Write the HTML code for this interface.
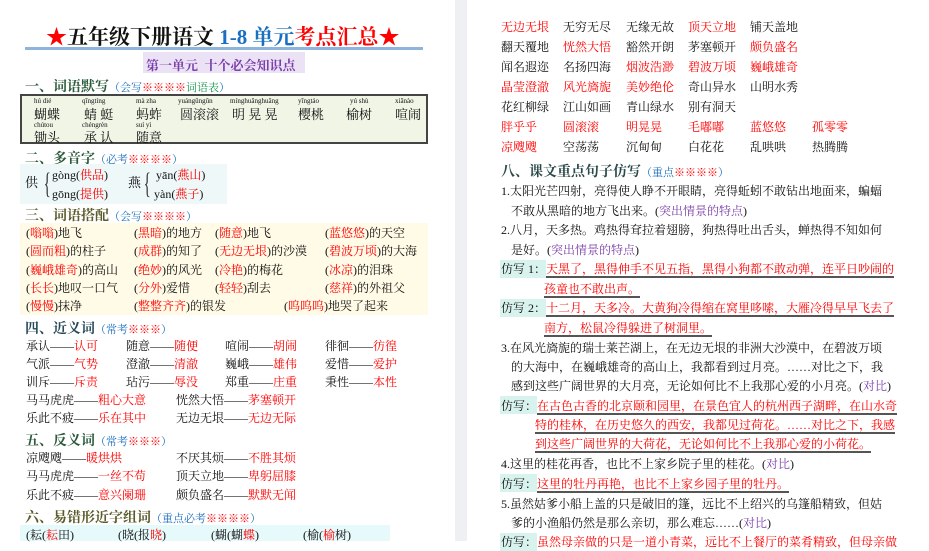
<!DOCTYPE html>
<html><head><meta charset="utf-8"><style>
*{margin:0;padding:0;box-sizing:border-box}
body{width:929px;height:541px;overflow:hidden;background:#fff;position:relative;font-family:"Liberation Serif","Noto Serif CJK SC","Noto Sans CJK SC",serif;color:#111}
.a{position:absolute;white-space:nowrap}
.r{color:#f00}.b{color:#1a6fc0}.g{color:#1a9a50}.p{color:#7a3fa8}
.h{font-weight:bold;font-size:14px;color:#2a5a3a}
.s{font-size:11px}
.L{font-size:12px;line-height:14px}
.R{font-size:12px;line-height:16px;letter-spacing:0}
.u{color:#f00;border-bottom:2px solid #555}
.f{background:#d8f2ee}
</style></head><body>
<div class="a" style="left:455px;top:0;width:12px;height:541px;background:#eef0f4"></div>

<!-- LEFT PAGE -->
<div class="a" style="left:46px;top:24px;font-size:21px;font-weight:bold;line-height:26px">
<span class="r">★</span>五年级下册语文 <span class="b">1-8 单元</span><span class="r">考点汇总★</span></div>
<div class="a" style="left:25px;top:47px;width:398px;height:3px;background:#8fb4dc"></div>
<div class="a" style="left:143px;top:52px;width:162px;height:21px;background:#ece2f6"></div>
<div class="a p" style="left:146px;top:55px;font-size:13px;font-weight:bold">第一单元&nbsp; 十个必会知识点</div>

<div class="a h" style="left:25px;top:76px">一、词语默写<span class="s b" style="font-weight:normal">（会写<span class="r">※※※※</span><span class="g">词语表</span>）</span></div>
<div class="a" style="left:20px;top:94px;width:408px;height:50px;background:#f0f5e6;border:2px solid #444"></div>
<div class="a" style="left:20px;top:97px;font-size:7px;width:408px">
<span class="a" style="left:14px">hú dié</span><span class="a" style="left:62px">qīngtíng</span><span class="a" style="left:116px">mà zha</span><span class="a" style="left:158px">yuángǔngǔn</span><span class="a" style="left:210px">mínghuǎnghuǎng</span><span class="a" style="left:278px">yīngtáo</span><span class="a" style="left:330px">yú shù</span><span class="a" style="left:375px">xiānào</span>
<span class="a" style="left:14px;top:24px">chútou</span><span class="a" style="left:62px;top:24px">chéngrèn</span><span class="a" style="left:116px;top:24px">suí yì</span></div>
<div class="a" style="left:20px;top:104px;font-size:13px;width:408px">
<span class="a" style="left:14px">蝴蝶</span><span class="a" style="left:64px">蜻 蜓</span><span class="a" style="left:116px">蚂蚱</span><span class="a" style="left:160px">圆滚滚</span><span class="a" style="left:212px">明 晃 晃</span><span class="a" style="left:278px">樱桃</span><span class="a" style="left:326px">榆树</span><span class="a" style="left:375px">喧闹</span>
<span class="a" style="left:14px;top:23px">锄头</span><span class="a" style="left:64px;top:23px">承 认</span><span class="a" style="left:116px;top:23px">随意</span></div>

<div class="a h" style="left:25px;top:148px">二、多音字<span class="s b" style="font-weight:normal">（必考<span class="r">※※※※</span>）</span></div>
<div class="a" style="left:20px;top:164px;width:207px;height:40px;background:#eef8f8"></div>
<div class="a L" style="left:25px;top:176px;font-size:13px">供</div>
<div class="a" style="left:40px;top:166px;font-size:30px;line-height:36px;color:#333;transform:scaleX(.5)">{</div>
<div class="a L" style="left:52px;top:168px">gòng(<span class="r">供品</span>)</div>
<div class="a L" style="left:52px;top:187px">gōng(<span class="r">提供</span>)</div>
<div class="a L" style="left:128px;top:176px;font-size:13px">燕</div>
<div class="a" style="left:140px;top:166px;font-size:30px;line-height:36px;color:#333;transform:scaleX(.5)">{</div>
<div class="a L" style="left:156px;top:168px">yān(<span class="r">燕山</span>)</div>
<div class="a L" style="left:154px;top:187px">yàn(<span class="r">燕子</span>)</div>

<div class="a h" style="left:25px;top:205px;color:#5a5a2a">三、词语搭配<span class="s b" style="font-weight:normal">（会写<span class="r">※※※※</span>）</span></div>
<div class="a" style="left:20px;top:223px;width:408px;height:92px;background:#fffbe6"></div>
<div class="a L" style="left:26px;top:226px">(<span class="r">嗡嗡</span>)地飞</div><div class="a L" style="left:134px;top:226px">(<span class="r">黑暗</span>)的地方</div><div class="a L" style="left:215px;top:226px">(<span class="r">随意</span>)地飞</div><div class="a L" style="left:325px;top:226px">(<span class="r">蓝悠悠</span>)的天空</div>
<div class="a L" style="left:26px;top:244px">(<span class="r">圆而粗</span>)的柱子</div><div class="a L" style="left:134px;top:244px">(<span class="r">成群</span>)的知了</div><div class="a L" style="left:215px;top:244px">(<span class="r">无边无垠</span>)的沙漠</div><div class="a L" style="left:325px;top:244px">(<span class="r">碧波万顷</span>)的大海</div>
<div class="a L" style="left:26px;top:263px">(<span class="r">巍峨雄奇</span>)的高山</div><div class="a L" style="left:134px;top:263px">(<span class="r">绝妙</span>)的风光</div><div class="a L" style="left:215px;top:263px">(<span class="r">冷艳</span>)的梅花</div><div class="a L" style="left:325px;top:263px">(<span class="r">冰凉</span>)的泪珠</div>
<div class="a L" style="left:26px;top:281px">(<span class="r">长长</span>)地叹一口气</div><div class="a L" style="left:134px;top:281px">(<span class="r">分外</span>)爱惜</div><div class="a L" style="left:215px;top:281px">(<span class="r">轻轻</span>)刮去</div><div class="a L" style="left:325px;top:281px">(<span class="r">慈祥</span>)的外祖父</div>
<div class="a L" style="left:26px;top:299px">(<span class="r">慢慢</span>)抹净</div><div class="a L" style="left:134px;top:299px">(<span class="r">整整齐齐</span>)的银发</div><div class="a L" style="left:284px;top:299px">(<span class="r">呜呜呜</span>)地哭了起来</div>

<div class="a h" style="left:25px;top:318px;color:#2a4a5a">四、近义词<span class="s b" style="font-weight:normal">（常考<span class="r">※※※</span>）</span></div>
<div class="a L" style="left:26px;top:339px">承认——<span class="r">认可</span></div><div class="a L" style="left:126px;top:339px">随意——<span class="r">随便</span></div><div class="a L" style="left:225px;top:339px">喧闹——<span class="r">胡闹</span></div><div class="a L" style="left:325px;top:339px">徘徊——<span class="r">彷徨</span></div>
<div class="a L" style="left:26px;top:357px">气派——<span class="r">气势</span></div><div class="a L" style="left:126px;top:357px">澄澈——<span class="r">清澈</span></div><div class="a L" style="left:225px;top:357px">巍峨——<span class="r">雄伟</span></div><div class="a L" style="left:325px;top:357px">爱惜——<span class="r">爱护</span></div>
<div class="a L" style="left:26px;top:375px">训斥——<span class="r">斥责</span></div><div class="a L" style="left:126px;top:375px">玷污——<span class="r">辱没</span></div><div class="a L" style="left:225px;top:375px">郑重——<span class="r">庄重</span></div><div class="a L" style="left:325px;top:375px">秉性——<span class="r">本性</span></div>
<div class="a L" style="left:26px;top:393px">马马虎虎——<span class="r">粗心大意</span></div><div class="a L" style="left:176px;top:393px">恍然大悟——<span class="r">茅塞顿开</span></div>
<div class="a L" style="left:26px;top:411px">乐此不疲——<span class="r">乐在其中</span></div><div class="a L" style="left:176px;top:411px">无边无垠——<span class="r">无边无际</span></div>

<div class="a h" style="left:25px;top:430px">五、反义词<span class="s b" style="font-weight:normal">（常考<span class="r">※※※</span>）</span></div>
<div class="a L" style="left:26px;top:451px">凉飕飕——<span class="r">暖烘烘</span></div><div class="a L" style="left:176px;top:451px">不厌其烦——<span class="r">不胜其烦</span></div>
<div class="a L" style="left:26px;top:469px">马马虎虎——<span class="r">一丝不苟</span></div><div class="a L" style="left:176px;top:469px">顶天立地——<span class="r">卑躬屈膝</span></div>
<div class="a L" style="left:26px;top:488px">乐此不疲——<span class="r">意兴阑珊</span></div><div class="a L" style="left:176px;top:488px">颇负盛名——<span class="r">默默无闻</span></div>

<div class="a h" style="left:25px;top:507px;color:#5a5a2a">六、易错形近字组词<span class="s b" style="font-weight:normal">（重点必考<span class="r">※※※※</span>）</span></div>
<div class="a" style="left:20px;top:525px;width:370px;height:16px;background:#e6fafc"></div>
<div class="a L" style="left:26px;top:528px">(耘(<span class="r">耘</span>田)</div><div class="a L" style="left:118px;top:528px">(晓(报<span class="r">晓</span>)</div><div class="a L" style="left:211px;top:528px">(蝴(蝴<span class="r">蝶</span>)</div><div class="a L" style="left:303px;top:528px">(榆(<span class="r">榆</span>树)</div>

<!-- RIGHT PAGE -->
<div class="a L" style="left:501px;top:20px;font-size:12px">
<div class="a" style="left:0"><span class="r">无边无垠</span></div><div class="a" style="left:62px">无穷无尽</div><div class="a" style="left:125px">无缘无故</div><div class="a r" style="left:187px">顶天立地</div><div class="a" style="left:249px">铺天盖地</div>
<div class="a" style="left:0;top:20px">翻天覆地</div><div class="a r" style="left:62px;top:20px">恍然大悟</div><div class="a" style="left:125px;top:20px">豁然开朗</div><div class="a" style="left:187px;top:20px">茅塞顿开</div><div class="a r" style="left:249px;top:20px">颇负盛名</div>
<div class="a" style="left:0;top:40px">闻名遐迩</div><div class="a" style="left:62px;top:40px">名扬四海</div><div class="a r" style="left:125px;top:40px">烟波浩渺</div><div class="a r" style="left:187px;top:40px">碧波万顷</div><div class="a r" style="left:249px;top:40px">巍峨雄奇</div>
<div class="a r" style="left:0;top:60px">晶莹澄澈</div><div class="a r" style="left:62px;top:60px">风光旖旎</div><div class="a r" style="left:125px;top:60px">美妙绝伦</div><div class="a" style="left:187px;top:60px">奇山异水</div><div class="a" style="left:249px;top:60px">山明水秀</div>
<div class="a" style="left:0;top:80px">花红柳绿</div><div class="a" style="left:62px;top:80px">江山如画</div><div class="a" style="left:125px;top:80px">青山绿水</div><div class="a" style="left:187px;top:80px">别有洞天</div>
<div class="a r" style="left:0;top:100px">胖乎乎</div><div class="a r" style="left:62px;top:100px">圆滚滚</div><div class="a r" style="left:125px;top:100px">明晃晃</div><div class="a r" style="left:187px;top:100px">毛嘟嘟</div><div class="a r" style="left:249px;top:100px">蓝悠悠</div><div class="a r" style="left:311px;top:100px">孤零零</div>
<div class="a r" style="left:0;top:120px">凉飕飕</div><div class="a" style="left:62px;top:120px">空荡荡</div><div class="a" style="left:125px;top:120px">沉甸甸</div><div class="a" style="left:187px;top:120px">白花花</div><div class="a" style="left:249px;top:120px">乱哄哄</div><div class="a" style="left:311px;top:120px">热腾腾</div>
</div>

<div class="a h" style="left:501px;top:161px;color:#2a4a4a">八、课文重点句子仿写<span class="s b" style="font-weight:normal">（重点<span class="r">※※※※</span>）</span></div>
<div class="a R" style="left:501px;top:183px">1.太阳光芒四射，亮得使人睁不开眼睛，亮得蚯蚓不敢钻出地面来，蝙蝠</div>
<div class="a R" style="left:511px;top:203px">不敢从黑暗的地方飞出来。(<span class="p">突出情景的特点</span>)</div>
<div class="a R" style="left:501px;top:222px">2.八月，天多热。鸡热得耷拉着翅膀，狗热得吐出舌头，蝉热得不知如何</div>
<div class="a R" style="left:511px;top:242px">是好。(<span class="p">突出情景的特点</span>)</div>
<div class="a f" style="left:500px;top:260px;width:46px;height:18px"></div>
<div class="a R" style="left:501px;top:261px">仿写 1：<span class="u">天黑了，黑得伸手不见五指，黑得小狗都不敢动弹，连平日吵闹的</span></div>
<div class="a R" style="left:544px;top:281px"><span class="u">孩童也不敢出声。</span></div>
<div class="a f" style="left:500px;top:299px;width:46px;height:18px"></div>
<div class="a R" style="left:501px;top:300px">仿写 2：<span class="u">十二月，天多冷。大黄狗冷得缩在窝里哆嗦，大雁冷得早早飞去了</span></div>
<div class="a R" style="left:544px;top:320px"><span class="u">南方，松鼠冷得躲进了树洞里。</span></div>
<div class="a R" style="left:501px;top:340px">3.在风光旖旎的瑞士莱芒湖上，在无边无垠的非洲大沙漠中，在碧波万顷</div>
<div class="a R" style="left:511px;top:359px">的大海中，在巍峨雄奇的高山上，我都看到过月亮。……对比之下，我</div>
<div class="a R" style="left:511px;top:378px">感到这些广阔世界的大月亮，无论如何比不上我那心爱的小月亮。(<span class="p">对比</span>)</div>
<div class="a f" style="left:500px;top:396px;width:37px;height:18px"></div>
<div class="a R" style="left:501px;top:398px">仿写：<span class="u">在古色古香的北京颐和园里，在景色宜人的杭州西子湖畔，在山水奇</span></div>
<div class="a R" style="left:535px;top:417px"><span class="u">特的桂林，在历史悠久的西安，我都见过荷花。……对比之下，我感</span></div>
<div class="a R" style="left:535px;top:436px"><span class="u">到这些广阔世界的大荷花，无论如何比不上我那心爱的小荷花。</span></div>
<div class="a R" style="left:501px;top:456px">4.这里的桂花再香，也比不上家乡院子里的桂花。(<span class="p">对比</span>)</div>
<div class="a f" style="left:500px;top:474px;width:37px;height:18px"></div>
<div class="a R" style="left:501px;top:476px">仿写：<span class="u">这里的牡丹再艳，也比不上家乡园子里的牡丹。</span></div>
<div class="a R" style="left:501px;top:496px">5.虽然姑爹小船上盖的只是破旧的篷，远比不上绍兴的乌篷船精致，但姑</div>
<div class="a R" style="left:511px;top:515px">爹的小渔船仍然是那么亲切，那么难忘……(<span class="p">对比</span>)</div>
<div class="a f" style="left:500px;top:533px;width:37px;height:18px"></div>
<div class="a R" style="left:501px;top:534px">仿写：<span class="r">虽然母亲做的只是一道小青菜，远比不上餐厅的菜肴精致，但母亲做</span></div>
</body></html>
